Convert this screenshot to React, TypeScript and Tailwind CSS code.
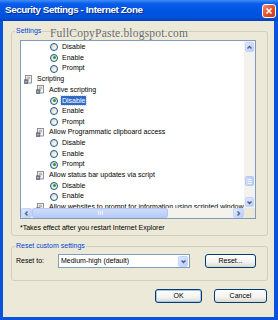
import React from "react";

type Row =
  | { kind: "group"; level: 0 | 1; label: string }
  | { kind: "radio"; label: string; checked?: boolean; selected?: boolean };

const rows: Row[] = [
  { kind: "radio", label: "Disable" },
  { kind: "radio", label: "Enable", checked: true },
  { kind: "radio", label: "Prompt" },
  { kind: "group", level: 0, label: "Scripting" },
  { kind: "group", level: 1, label: "Active scripting" },
  { kind: "radio", label: "Disable", checked: true, selected: true },
  { kind: "radio", label: "Enable" },
  { kind: "radio", label: "Prompt" },
  { kind: "group", level: 1, label: "Allow Programmatic clipboard access" },
  { kind: "radio", label: "Disable" },
  { kind: "radio", label: "Enable" },
  { kind: "radio", label: "Prompt", checked: true },
  { kind: "group", level: 1, label: "Allow status bar updates via script" },
  { kind: "radio", label: "Disable", checked: true },
  { kind: "radio", label: "Enable" },
  { kind: "group", level: 1, label: "Allow websites to prompt for information using scripted windows" },
];

function SettingIcon() {
  return (
    <svg width="9" height="9" viewBox="0 0 9 9" className="shrink-0">
      <rect x="1.5" y="0.5" width="6" height="7.5" fill="#f4f4f4" stroke="#7a7a7a" strokeWidth="0.8" />
      <path d="M2.8 2.2h3.4M2.8 3.7h3.4M2.8 5.2h2.2" stroke="#8a8a8a" strokeWidth="0.7" />
      <rect x="0.3" y="4.8" width="3.6" height="3.8" fill="#6f7f95" stroke="#4a5566" strokeWidth="0.5" />
      <path d="M1 6.7h2.2" stroke="#dfe6f0" strokeWidth="0.6" />
    </svg>
  );
}

function Radio({ checked }: { checked?: boolean }) {
  return (
    <span className="flex h-[8px] w-[8px] shrink-0 items-center justify-center rounded-full border border-[#1c5180] bg-[linear-gradient(135deg,#dcd9cd,#ffffff)]">
      {checked && <span className="h-[3px] w-[3px] rounded-full bg-[#21a121]" />}
    </span>
  );
}

function Chevron({ dir }: { dir: "up" | "down" | "left" | "right" }) {
  const d = {
    up: "M1.5 4.5 L3.5 2.5 L5.5 4.5",
    down: "M1.5 2.5 L3.5 4.5 L5.5 2.5",
    left: "M4.5 1.5 L2.5 3.5 L4.5 5.5",
    right: "M2.5 1.5 L4.5 3.5 L2.5 5.5",
  }[dir];
  return (
    <svg width="7" height="7" viewBox="0 0 7 7">
      <path d={d} fill="none" stroke="#4d6185" strokeWidth="1.4" />
    </svg>
  );
}

function ScrollBtn({ dir, className = "" }: { dir: "up" | "down" | "left" | "right"; className?: string }) {
  return (
    <div
      className={`flex shrink-0 items-center justify-center rounded-[2px] border border-[#c3d3fd] bg-[linear-gradient(135deg,#e1eafe,#b9ccf7)] ${className}`}
    >
      <Chevron dir={dir} />
    </div>
  );
}

function ListRow({ row }: { row: Row }) {
  if (row.kind === "group") {
    return (
      <div className={`flex h-[10.67px] items-center ${row.level === 0 ? "pl-[3px]" : "pl-[15px]"}`}>
        <SettingIcon />
        <span className="ml-[4px] whitespace-nowrap">{row.label}</span>
      </div>
    );
  }
  return (
    <div className="flex h-[10.67px] items-center pl-[29px]">
      <Radio checked={row.checked} />
      {row.selected ? (
        <span className="ml-[3px] whitespace-nowrap bg-[#316ac5] px-[1px] leading-[9px] text-white outline outline-1 outline-dotted outline-[#c8d4ee]">
          {row.label}
        </span>
      ) : (
        <span className="ml-[4px] whitespace-nowrap">{row.label}</span>
      )}
    </div>
  );
}

function XpButton({ label, isDefault, className = "" }: { label: string; isDefault?: boolean; className?: string }) {
  return (
    <div
      className={`flex h-[14px] items-center justify-center rounded-[3px] border border-[#003c74] bg-[linear-gradient(to_bottom,#ffffff,#f3f3ef_60%,#dcd8cb)] text-[7px] ${
        isDefault ? "shadow-[inset_0_0_0_1px_#a8c6f3]" : ""
      } ${className}`}
    >
      {label}
    </div>
  );
}

export default function App() {
  return (
    <div className="flex h-[320px] w-[278px] flex-col overflow-hidden bg-[#0a53dc] font-['Liberation_Sans',Arial,sans-serif] text-[7px] text-black">
      <div className="flex h-[21px] shrink-0 items-center justify-between bg-[linear-gradient(to_bottom,#3d8df5_0%,#0a5ce9_18%,#0054e3_55%,#0150d8_85%,#0240b8_100%)] pl-[5px] pr-[2px]">
        <span className="whitespace-nowrap text-[9.8px] font-bold tracking-[-0.4px] text-white [text-shadow:1px_1px_0_#0a2a80]">
          Security Settings - Internet Zone
        </span>
        <div className="flex h-[14px] w-[14px] items-center justify-center rounded-[3px] border border-white bg-[linear-gradient(135deg,#f08e6e,#dd4f27_55%,#c43d17)]">
          <svg width="8" height="8" viewBox="0 0 8 8">
            <path d="M1.5 1.5 L6.5 6.5 M6.5 1.5 L1.5 6.5" stroke="white" strokeWidth="1.6" />
          </svg>
        </div>
      </div>

      <div className="relative mb-[3px] ml-[3px] mr-[4px] flex flex-1 flex-col bg-[#ece9d8]">
        <span className="absolute left-[47px] top-[4px] whitespace-nowrap font-['Liberation_Serif',serif] text-[11.5px] tracking-[0.2px] text-[#666666] [text-shadow:0_0_1px_#ffffff]">
          FullCopyPaste.blogspot.com
        </span>

        <fieldset className="ml-[8px] mr-[6px] mt-[5px] h-[210px] rounded-[3px] border border-[#d0d0bf]">
          <legend className="ml-[3px] px-[1px] text-[7px] leading-[10px] text-[#0046d5]">Settings</legend>
          <div className="ml-[8px] mt-[4px] flex h-[179px] w-[236px] flex-col border border-[#7f9db9] bg-white">
            <div className="flex min-h-0 flex-1">
              <div className="min-w-0 flex-1 overflow-hidden pt-[1px]">
                {rows.map((row, i) => (
                  <ListRow key={i} row={row} />
                ))}
              </div>
              <div className="flex w-[11px] shrink-0 flex-col bg-[#f3f2ec] p-[1px]">
                <ScrollBtn dir="up" className="h-[10px]" />
                <div className="mt-[124px] flex h-[10px] items-center justify-center rounded-[2px] border border-[#b5c8f3] bg-[linear-gradient(to_right,#cfdcfd,#b8cbf6)]">
                  <div className="flex flex-col gap-[1px]">
                    <div className="h-[1px] w-[4px] bg-[#eef3ff]" />
                    <div className="h-[1px] w-[4px] bg-[#eef3ff]" />
                    <div className="h-[1px] w-[4px] bg-[#eef3ff]" />
                  </div>
                </div>
                <div className="flex-1" />
                <ScrollBtn dir="down" className="h-[10px]" />
              </div>
            </div>
            <div className="flex h-[10px] shrink-0 bg-[#f3f2ec]">
              <ScrollBtn dir="left" className="w-[11px]" />
              <div className="flex h-full w-[136px] items-center justify-center rounded-[2px] border border-[#b5c8f3] bg-[linear-gradient(to_bottom,#cfdcfd,#b8cbf6)]">
                <div className="flex gap-[1px]">
                  <div className="h-[4px] w-[1px] bg-[#eef3ff]" />
                  <div className="h-[4px] w-[1px] bg-[#eef3ff]" />
                  <div className="h-[4px] w-[1px] bg-[#eef3ff]" />
                </div>
              </div>
              <div className="flex-1" />
              <ScrollBtn dir="right" className="w-[11px]" />
              <div className="w-[11px] bg-[#ece9d8]" />
            </div>
          </div>
          <div className="ml-[8px] mt-[4px] whitespace-nowrap">*Takes effect after you restart Internet Explorer</div>
        </fieldset>

        <fieldset className="ml-[8px] mr-[6px] mt-[5px] h-[40px] rounded-[3px] border border-[#d0d0bf]">
          <legend className="ml-[3px] px-[1px] text-[7px] leading-[10px] text-[#0046d5]">Reset custom settings</legend>
          <div className="mt-[3px] flex items-center pl-[4px]">
            <span className="w-[42px] whitespace-nowrap">Reset to:</span>
            <div className="flex h-[14px] w-[132px] items-center border border-[#7f9db9] bg-white pl-[2px]">
              <span className="flex-1 whitespace-nowrap">Medium-high (default)</span>
              <ScrollBtn dir="down" className="mr-[1px] h-[11px] w-[10px]" />
            </div>
            <XpButton label="Reset..." className="ml-[15px] w-[51px]" />
          </div>
        </fieldset>

        <div className="mr-[7px] mt-[8px] flex justify-end gap-[12px]">
          <XpButton label="OK" isDefault className="w-[47px]" />
          <XpButton label="Cancel" className="w-[53px]" />
        </div>
      </div>
    </div>
  );
}
